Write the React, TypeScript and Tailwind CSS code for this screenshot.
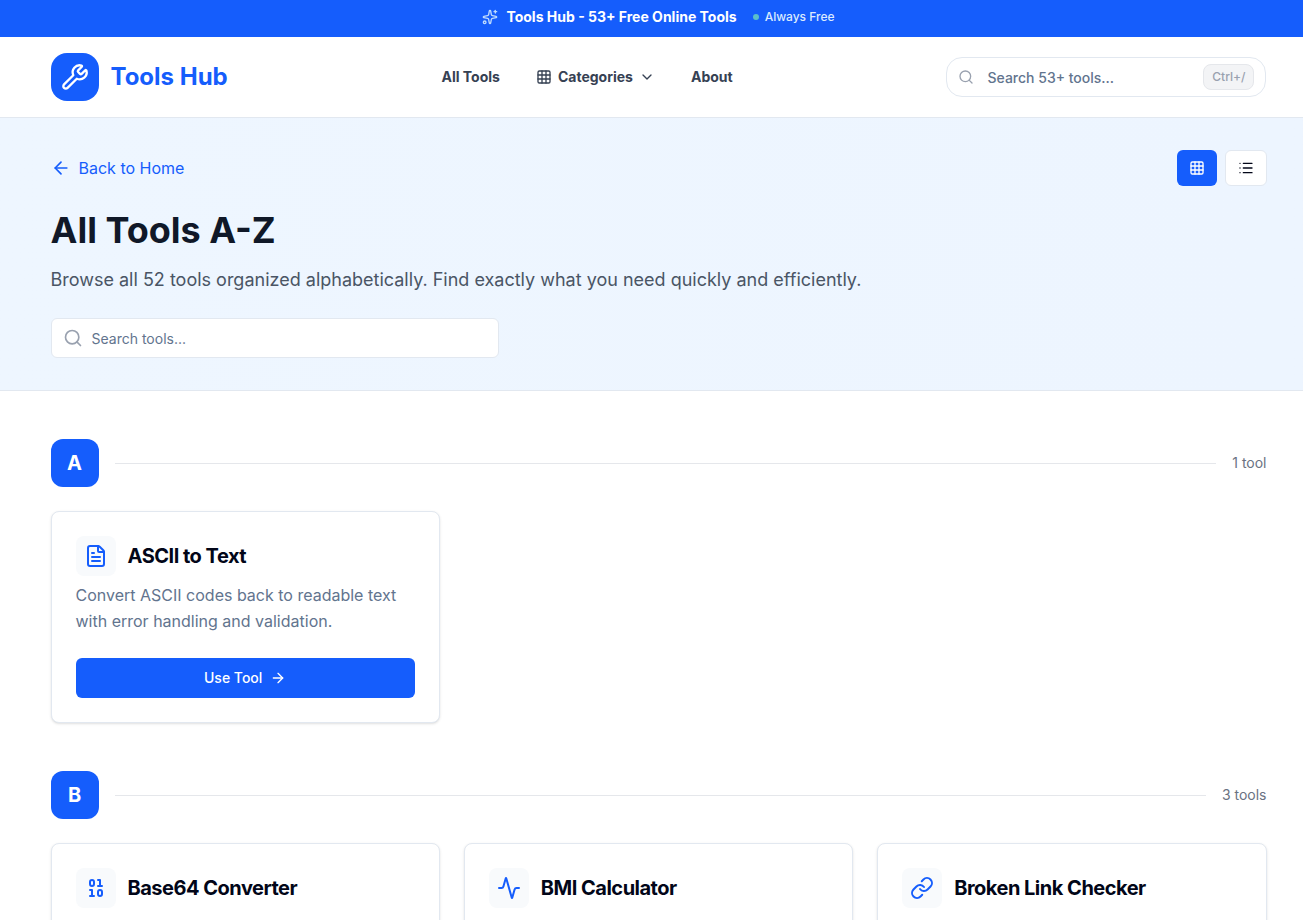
import { useState } from "react";
import {
  Activity,
  ArrowLeft,
  ArrowRight,
  Binary,
  ChevronDown,
  FileText,
  Grid3x3,
  Link,
  List,
  Search,
  Sparkles,
  Wrench,
  type LucideIcon,
} from "lucide-react";

interface Tool {
  name: string;
  description?: string;
  icon: LucideIcon;
}

const TOOLS: Tool[] = [
  {
    name: "ASCII to Text",
    description: "Convert ASCII codes back to readable text with error handling and validation.",
    icon: FileText,
  },
  { name: "Base64 Converter", icon: Binary },
  { name: "BMI Calculator", icon: Activity },
  { name: "Broken Link Checker", icon: Link },
];

const CONTAINER = "max-w-7xl mx-auto px-8";

function groupByLetter(tools: Tool[]) {
  const groups: Record<string, Tool[]> = {};
  for (const tool of tools) {
    const letter = tool.name[0].toUpperCase();
    (groups[letter] ??= []).push(tool);
  }
  return Object.entries(groups);
}

function Banner() {
  return (
    <div className="bg-blue-600 text-white pl-[14px] pt-[7px] pb-[10px]">
      <div className="flex items-center justify-center gap-4">
        <div className="flex items-center gap-2">
          <Sparkles className="w-4 h-4 text-blue-200" />
          <span className="text-sm font-bold">Tools Hub - 53+ Free Online Tools</span>
        </div>
        <div className="flex items-center gap-1.5 text-xs font-medium text-blue-100">
          <span className="w-1.5 h-1.5 rounded-full bg-[#5bbfc9]" />
          <span>Always Free</span>
        </div>
      </div>
    </div>
  );
}

function Header() {
  const navItem = "flex items-center px-4 py-2 text-sm font-bold text-gray-700 hover:text-blue-600";

  return (
    <header className="bg-white border-b border-slate-200 pl-[14px]">
      <div className={`${CONTAINER} h-20 flex items-center justify-between`}>
        <a href="#" className="flex items-center gap-3">
          <span className="w-12 h-12 rounded-2xl bg-blue-600 flex items-center justify-center">
            <Wrench className="w-7 h-7 text-white" />
          </span>
          <span className="text-2xl font-bold text-blue-600">Tools Hub</span>
        </a>

        <nav className="flex items-center gap-1">
          <a href="#tools" className={navItem}>All Tools</a>
          <button type="button" className={navItem}>
            <Grid3x3 className="w-4 h-4 mr-1.5" />
            Categories
            <ChevronDown className="w-4 h-4 ml-1.5" />
          </button>
          <a href="#about" className={navItem}>About</a>
        </nav>

        <div className="relative w-80">
          <Search className="absolute left-3 top-1/2 -translate-y-1/2 w-4 h-4 text-gray-400" />
          <input
            type="text"
            aria-label="Search all tools"
            placeholder="Search 53+ tools..."
            className="h-10 w-full rounded-2xl border border-slate-200 bg-white pl-10 pr-16 text-sm font-medium placeholder:text-slate-500"
          />
          <kbd className="absolute right-3 top-1/2 -translate-y-1/2 rounded-lg border border-gray-200 bg-gray-100 px-2 py-1 font-[Inter] text-xs font-medium text-gray-400">
            Ctrl+/
          </kbd>
        </div>
      </div>
    </header>
  );
}

function ToolCard({ tool }: { tool: Tool }) {
  const Icon = tool.icon;
  return (
    <article className="rounded-lg border border-slate-200 bg-white p-6 shadow-sm">
      <div className="flex items-center gap-3">
        <span className="w-10 h-10 rounded-lg bg-slate-50 flex items-center justify-center">
          <Icon className="w-6 h-6 text-blue-600" />
        </span>
        <h3 className="text-xl font-bold tracking-tight text-slate-950">{tool.name}</h3>
      </div>
      {tool.description && (
        <>
          <p className="mt-1.5 text-base leading-[26px] text-slate-500">{tool.description}</p>
          <button
            type="button"
            className="mt-6 h-10 w-full flex items-center justify-center gap-2 rounded-md bg-blue-600 text-sm font-medium text-white hover:bg-blue-700"
          >
            Use Tool
            <ArrowRight className="w-4 h-4" />
          </button>
        </>
      )}
    </article>
  );
}

export default function App() {
  const [view, setView] = useState<"grid" | "list">("grid");
  const [query, setQuery] = useState("");

  const visible = TOOLS.filter((t) => t.name.toLowerCase().includes(query.toLowerCase()));
  const active = "bg-blue-600 text-white";
  const inactive = "bg-white text-slate-950 border border-slate-200";

  return (
    <div className="min-h-screen bg-white font-[Inter,sans-serif]">
      <Banner />
      <Header />

      <section className="bg-linear-to-r from-[#eef6ff] to-[#edf5ff] border-b border-slate-200 pl-[14px]">
        <div className={`${CONTAINER} py-8`}>
          <div className="flex items-center justify-between mb-6">
            <a href="#" className="flex items-center gap-2 text-base text-blue-600 hover:text-blue-700">
              <ArrowLeft className="w-5 h-5" />
              Back to Home
            </a>
            <div className="flex items-center gap-2">
              <button
                type="button"
                aria-label="Grid view"
                onClick={() => setView("grid")}
                className={`h-9 px-3 rounded-md ${view === "grid" ? active : inactive}`}
              >
                <Grid3x3 className="w-4 h-4" />
              </button>
              <button
                type="button"
                aria-label="List view"
                onClick={() => setView("list")}
                className={`h-9 px-3 rounded-md ${view === "list" ? active : inactive}`}
              >
                <List className="w-4 h-4" />
              </button>
            </div>
          </div>

          <h1 className="mb-4 text-4xl font-bold text-gray-900">All Tools A-Z</h1>
          <p className="mb-6 text-lg leading-7 text-gray-600">
            Browse all 52 tools organized alphabetically. Find exactly what you need quickly and efficiently.
          </p>

          <div className="relative max-w-md">
            <Search className="absolute left-3 top-1/2 -translate-y-1/2 w-5 h-5 text-gray-400" />
            <input
              type="text"
              aria-label="Search tools"
              placeholder="Search tools..."
              value={query}
              onChange={(e) => setQuery(e.target.value)}
              className="h-10 w-full rounded-md border border-slate-200 bg-white pl-10 pr-3 text-sm text-slate-950 placeholder:text-slate-500"
            />
          </div>
        </div>
      </section>

      <main id="tools" className="pl-[14px]">
        <div className={`${CONTAINER} py-12 flex flex-col gap-12`}>
          {groupByLetter(visible).map(([letter, tools]) => (
            <section key={letter}>
              <div className="flex items-center gap-4 mb-6">
                <h2 className="w-12 h-12 rounded-xl bg-blue-600 flex items-center justify-center text-xl font-bold text-white">
                  {letter}
                </h2>
                <div className="flex-1 h-px bg-gray-200" />
                <span className="text-sm text-gray-500">
                  {tools.length} {tools.length === 1 ? "tool" : "tools"}
                </span>
              </div>
              <div className={view === "grid" ? "grid grid-cols-3 gap-6" : "grid gap-4"}>
                {tools.map((tool) => (
                  <ToolCard key={tool.name} tool={tool} />
                ))}
              </div>
            </section>
          ))}
        </div>
      </main>
    </div>
  );
}
